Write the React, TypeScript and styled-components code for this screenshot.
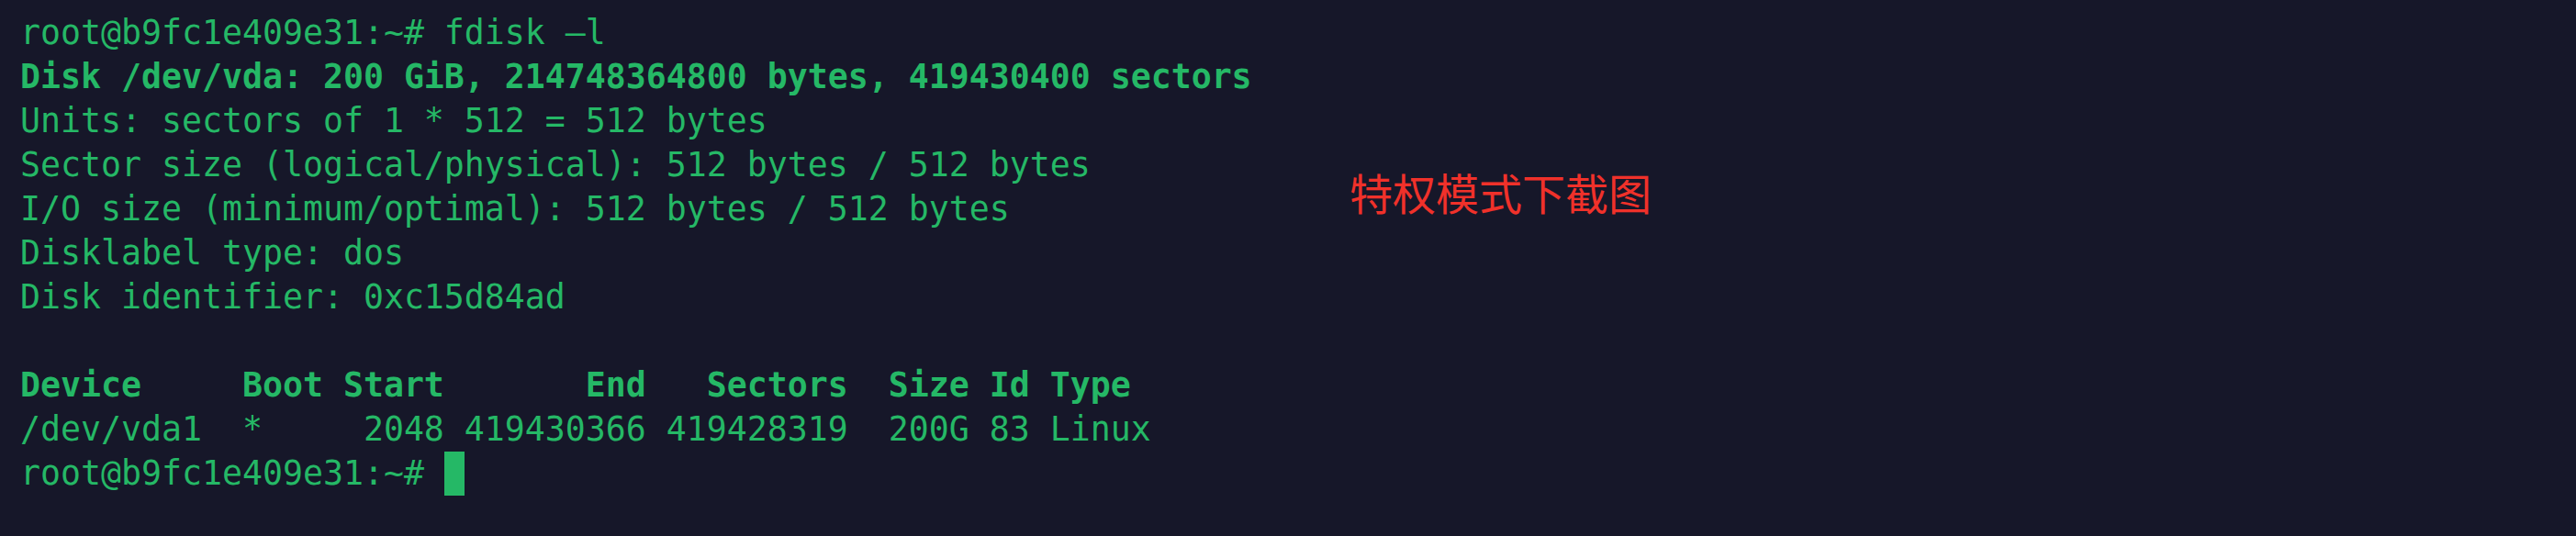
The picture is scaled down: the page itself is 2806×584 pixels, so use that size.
import React from "react";
import styled, { createGlobalStyle } from "styled-components";

const GlobalStyle = createGlobalStyle`
  html, body {
    margin: 0;
    padding: 0;
    background: #161729;
  }
`;

const Screen = styled.div`
  position: relative;
  width: 2806px;
  height: 584px;
  box-sizing: border-box;
  padding: 12px 22px;
  background: #161729;
  overflow: hidden;
`;

const Terminal = styled.div`
  display: flex;
  flex-direction: column;
  font-family: "DejaVu Sans Mono", "Liberation Mono", monospace;
  font-size: 36.54px;
  color: #25b866;
`;

const Line = styled.div<{ $bold?: boolean }>`
  height: 48px;
  line-height: 48px;
  white-space: pre;
  font-weight: ${(p) => (p.$bold ? 700 : 400)};
  display: flex;
  align-items: center;
`;

const Cursor = styled.span`
  display: inline-block;
  width: 22px;
  height: 48px;
  background: #25b866;
`;

const Note = styled.div`
  position: absolute;
  left: 1470px;
  top: 180px;
  font-family: "Noto Sans CJK SC", "Noto Sans", sans-serif;
  font-size: 47px;
  line-height: 58px;
  color: #f0312a;
  white-space: nowrap;
`;

const lines: { text: string; bold?: boolean }[] = [
  { text: "root@b9fc1e409e31:~# fdisk –l" },
  { text: "Disk /dev/vda: 200 GiB, 214748364800 bytes, 419430400 sectors", bold: true },
  { text: "Units: sectors of 1 * 512 = 512 bytes" },
  { text: "Sector size (logical/physical): 512 bytes / 512 bytes" },
  { text: "I/O size (minimum/optimal): 512 bytes / 512 bytes" },
  { text: "Disklabel type: dos" },
  { text: "Disk identifier: 0xc15d84ad" },
  { text: "" },
  { text: "Device     Boot Start       End   Sectors  Size Id Type", bold: true },
  { text: "/dev/vda1  *     2048 419430366 419428319  200G 83 Linux" },
];

export default function App() {
  return (
    <>
      <GlobalStyle />
      <Screen>
        <Terminal>
          {lines.map((l, i) => (
            <Line key={i} $bold={l.bold}>
              {l.text}
            </Line>
          ))}
          <Line>
            {"root@b9fc1e409e31:~# "}
            <Cursor />
          </Line>
        </Terminal>
        <Note>特权模式下截图</Note>
      </Screen>
    </>
  );
}
